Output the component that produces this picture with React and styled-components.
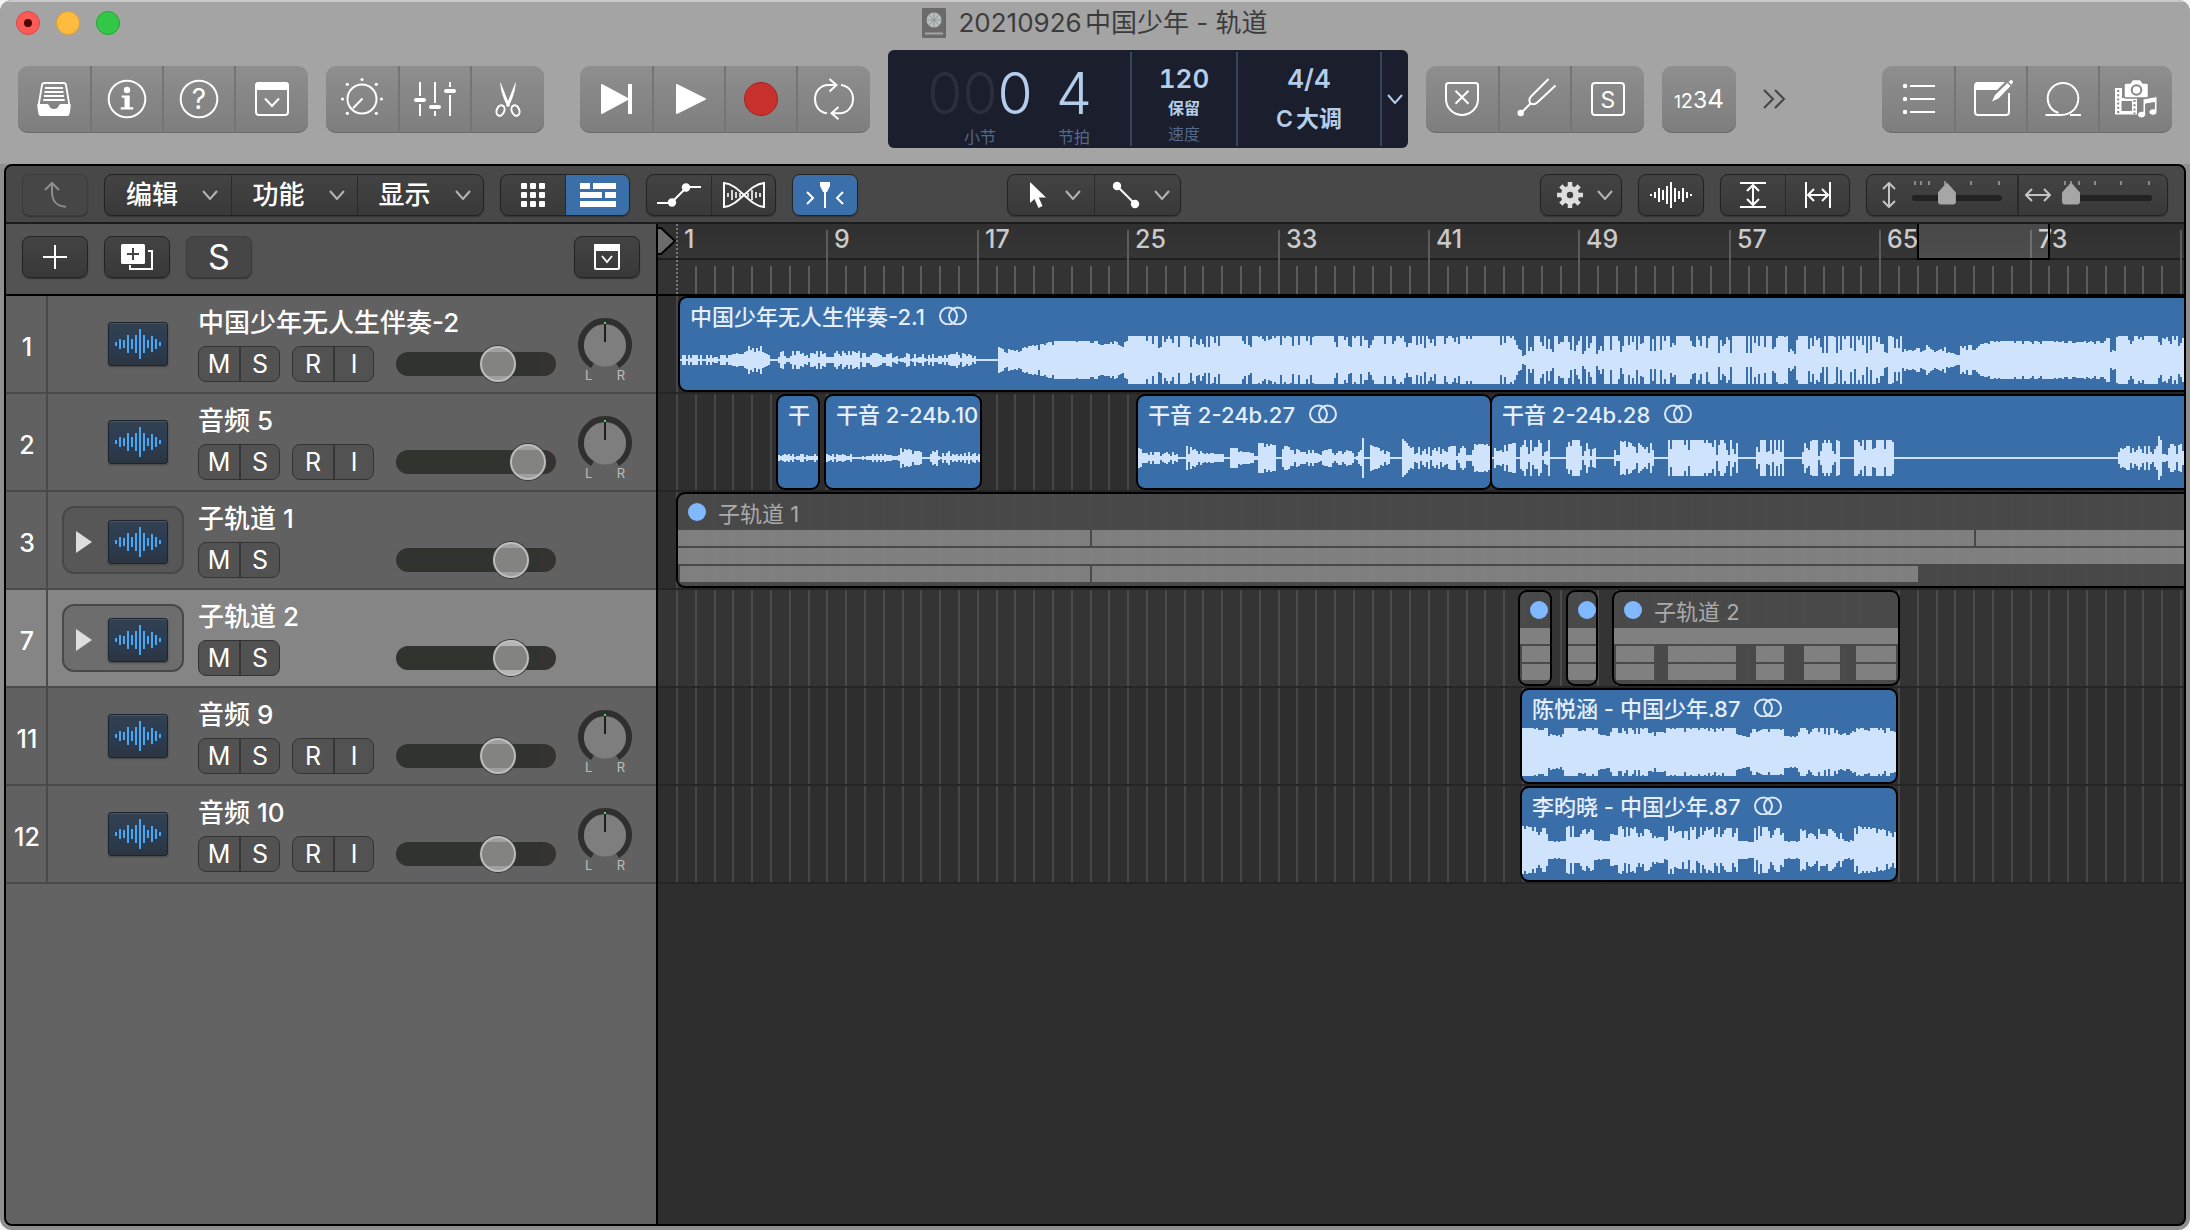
import React from "react"
import styled, { createGlobalStyle, css } from "styled-components"

/**
 * Tracks window of an audio workstation.
 *
 * - TitleBar / ControlBar: window chrome, transport and LCD.
 * - Toolbar: menus, tools and zoom sliders.
 * - TrackHeader: one row of the track list.
 * - Timeline: ruler, grid and regions.
 */

const GlobalStyle = createGlobalStyle`
  * {
    box-sizing: border-box;
  }
  body {
    margin: 0;
    background: #f4f4f4;
    font-family: Inter, "Noto Sans CJK SC", sans-serif;
  }
  button {
    font: inherit;
    color: inherit;
    padding: 0;
    margin: 0;
    border: 0;
    background: none;
  }
  svg {
    display: block;
    flex: none;
  }
`

/* ---------- data ---------- */

const BAR = 18.8
const ORIGIN = 19
const barX = bar => Math.round((bar - 1) * BAR) + ORIGIN

// waveform segments: [length, amplitude from, amplitude to, dip, chance of a dip]
const BACKING_WAVE = [
  [50, 5, 5, 1, 0.8],
  [18, 5, 10, 5, 0.6],
  [14, 15, 14, 8, 0.6],
  [8, 8, 4, 3, 0.5],
  [8, 1, 1, 1, 0],
  [92, 9, 9, 2, 0.8],
  [86, 7, 6, 1, 0.8],
  [20, 8, 4, 1, 0.5],
  [22, 1, 1, 1, 0],
  [6, 13, 12, 9, 0.3],
  [18, 11, 9, 7, 0.6],
  [20, 13, 16, 9, 0.4],
  [12, 16, 19, 15, 0.5],
  [64, 19, 19, 15, 0.5],
  [10, 16, 20, 13, 0.5],
  [16, 24, 24, 24, 0],
  [80, 24, 24, 12, 0.6],
  [14, 24, 24, 24, 0],
  [82, 24, 24, 12, 0.6],
  [14, 24, 24, 24, 0],
  [104, 24, 24, 12, 0.6],
  [80, 24, 24, 14, 0.5],
  [8, 12, 3, 3, 0.5],
  [376, 24, 24, 6, 0.5],
  [10, 12, 9, 8, 0.4],
  [10, 10, 14, 8, 0.4],
  [12, 18, 8, 8, 0.4],
  [12, 8, 14, 6, 0.4],
  [14, 8, 5, 4, 0.4],
  [28, 14, 17, 9, 0.6],
  [118, 19, 19, 16, 0.5],
  [4, 22, 22, 20, 0.2],
  [6, 12, 7, 6, 0.2],
  [560, 24, 24, 13, 0.6],
]

const VOCAL_28_WAVE = [
  [2, 1, 1, 1, 0],
  [22, 10, 16, 5, 0.4],
  [4, 1, 1, 1, 0],
  [30, 18, 18, 2, 0.7],
  [16, 1, 1, 1, 0],
  [30, 18, 18, 2, 0.8],
  [18, 1, 1, 1, 0],
  [20, 17, 17, 2, 0.9],
  [20, 15, 15, 3, 0.8],
  [14, 1, 1, 1, 0],
  [38, 18, 18, 8, 0.3],
  [32, 18, 18, 2, 0.7],
  [18, 1, 1, 1, 0],
  [28, 18, 18, 2, 0.6],
  [18, 1, 1, 1, 0],
  [38, 18, 18, 2, 0.8],
  [14, 1, 1, 1, 0],
  [40, 18, 18, 8, 0.3],
  [224, 1, 1, 1, 0],
  [40, 12, 12, 2, 0.8],
  [4, 22, 14, 10, 0.2],
  [6, 4, 4, 1, 0.5],
  [400, 14, 14, 4, 0.6],
]

const VOCAL_27_WAVE = [
  [12, 10, 6, 3, 0.4],
  [28, 6, 6, 2, 0.7],
  [8, 1, 1, 1, 0],
  [16, 12, 7, 4, 0.4],
  [22, 5, 4, 2, 0.5],
  [6, 1, 1, 1, 0],
  [12, 10, 9, 6, 0.4],
  [12, 6, 5, 3, 0.5],
  [4, 2, 2, 1, 0.5],
  [18, 15, 13, 8, 0.4],
  [6, 1, 1, 1, 0],
  [18, 13, 8, 3, 0.6],
  [26, 8, 8, 3, 0.6],
  [36, 9, 8, 1, 0.8],
  [2, 20, 20, 20, 0],
  [6, 1, 1, 1, 0],
  [20, 13, 5, 4, 0.3],
  [12, 1, 1, 1, 0],
  [10, 19, 8, 8, 0.2],
  [34, 11, 11, 2, 0.8],
  [20, 12, 12, 2, 0.8],
  [6, 3, 3, 1, 0.5],
  [20, 14, 14, 4, 0.6],
]

const SHORT_WAVE = [[42, 4, 4, 1, 0.7]]

const VOCAL_10_WAVE = [
  [26, 4, 4, 1, 0.7],
  [20, 1, 2, 1, 0.5],
  [28, 4, 3, 1, 0.6],
  [22, 10, 6, 4, 0.4],
  [8, 1, 1, 1, 0],
  [50, 8, 5, 1, 0.7],
]

const CHORUS_WAVE = [
  [26, 24, 24, 21, 0.4],
  [16, 18, 18, 15, 0.5],
  [34, 24, 24, 21, 0.4],
  [12, 18, 16, 15, 0.5],
  [40, 24, 24, 17, 0.5],
  [16, 20, 20, 15, 0.5],
  [70, 24, 24, 20, 0.4],
  [14, 18, 14, 13, 0.5],
  [34, 23, 23, 19, 0.4],
  [14, 16, 16, 15, 0.4],
  [40, 24, 24, 17, 0.5],
  [14, 19, 19, 13, 0.5],
  [46, 24, 24, 19, 0.3],
]

const HARMONY_WAVE = [
  [26, 24, 22, 14, 0.5],
  [18, 9, 9, 8, 0.5],
  [28, 24, 22, 12, 0.7],
  [16, 10, 9, 8, 0.5],
  [42, 24, 22, 12, 0.8],
  [16, 14, 12, 8, 0.5],
  [70, 24, 22, 9, 0.8],
  [16, 9, 8, 8, 0.3],
  [30, 24, 22, 9, 0.6],
  [16, 9, 9, 8, 0.3],
  [42, 22, 20, 11, 0.8],
  [12, 11, 9, 8, 0.3],
  [44, 24, 20, 13, 0.6],
]

const TRACKS = [
  {
    number: 1,
    name: "中国少年无人生伴奏-2",
    volume: 68,
    regions: [
      { name: "中国少年无人生伴奏-2.1", left: 20, width: 2400, stereo: true, wave: BACKING_WAVE },
    ],
  },
  {
    number: 2,
    name: "音频 5",
    volume: 92,
    regions: [
      { name: "干", left: 118, width: 44, wave: SHORT_WAVE },
      { name: "干音 2-24b.10", left: 166, width: 158, wave: VOCAL_10_WAVE },
      { name: "干音 2-24b.27", left: 478, width: 356, stereo: true, wave: VOCAL_27_WAVE },
      { name: "干音 2-24b.28", left: 832, width: 1600, stereo: true, wave: VOCAL_28_WAVE },
    ],
  },
  {
    number: 3,
    name: "子轨道 1",
    volume: 78,
    folder: true,
    regions: [
      {
        name: "子轨道 1",
        left: 18,
        width: 2400,
        lanes: [
          [[0, 412], [414, 1296], [1298, 2400]],
          [[0, 2400]],
          [[2, 412], [414, 1240]],
        ],
      },
    ],
  },
  {
    number: 7,
    name: "子轨道 2",
    volume: 78,
    folder: true,
    selected: true,
    regions: [
      { name: "", left: 860, width: 34, lanes: [[[0, 30]], [[2, 30]], [[2, 30]]] },
      { name: "", left: 908, width: 32, lanes: [[[0, 30]], [[0, 28]], [[0, 28]]] },
      {
        name: "子轨道 2",
        left: 954,
        width: 288,
        lanes: [
          [[0, 284]],
          [[2, 40], [54, 122], [142, 170], [190, 226], [242, 282]],
          [[2, 40], [54, 122], [142, 170], [190, 226], [242, 282]],
        ],
      },
    ],
  },
  {
    number: 11,
    name: "音频 9",
    volume: 68,
    regions: [
      { name: "陈悦涵 - 中国少年.87", left: 862, width: 378, stereo: true, wave: CHORUS_WAVE },
    ],
  },
  {
    number: 12,
    name: "音频 10",
    volume: 68,
    regions: [
      { name: "李昀晓 - 中国少年.87", left: 862, width: 378, stereo: true, wave: HARMONY_WAVE },
    ],
  },
]

/* ---------- icons ---------- */

const Icon = ({ w = 48, h = 48, children, color = "#fff", line = 2 }) => (
  <svg
    width={w}
    height={h}
    viewBox={`0 0 ${w} ${h}`}
    fill="none"
    stroke={color}
    strokeWidth={line}
    aria-hidden="true"
  >
    {children}
  </svg>
)

const LibraryIcon = () => (
  <Icon>
    <path d="M8.500 31 12 10q.4-2 2.400-2h19.200q2 0 2.400 2L39.500 31" strokeWidth="1.800" />
    <path d="M15 13h18M14.500 17h19M14 21h20M13.300 25h21.400" strokeWidth="1.800" />
    <path
      d="M7.500 29h9.500c3 0 1.500 5 7 5s4-5 7-5h9.500v4l-1 6q-.4 2-2.400 2H10.900q-2 0-2.400-2l-1-6z"
      fill="#fff"
      stroke="none"
    />
  </Icon>
)

const InfoIcon = () => (
  <Icon>
    <circle cx="24" cy="24" r="18.300" />
    <circle cx="24" cy="15" r="3.200" fill="#fff" stroke="none" />
    <path d="M18.700 20.500h8v11.800h3.600v2.200H17.700v-2.200h3.800v-9.600h-2.800z" fill="#fff" stroke="none" />
  </Icon>
)

const HelpIcon = () => (
  <Icon>
    <circle cx="24" cy="24" r="18.300" />
    <text x="24" y="34" fontSize="28" textAnchor="middle" fill="#fff" stroke="none">
      ?
    </text>
  </Icon>
)

const DrawerIcon = () => (
  <Icon>
    <rect x="8" y="8" width="32" height="32" rx="3" />
    <path d="M7 15v-4.500Q7 7 10.500 7h27Q41 7 41 10.500V15z" fill="#fff" stroke="none" />
    <path d="m17 23.500 7 7.500 7-7.500" />
  </Icon>
)

const KnobIcon = () => (
  <Icon>
    <circle cx="24" cy="24" r="14.500" />
    <path d="M15 33.300 24.500 23.500" />
    {[[24, 4.500], [9.300, 9.300], [38.300, 9.300], [4.500, 24], [43.500, 24], [9.300, 38.300], [38.300, 38.300]].map(
      ([cx, cy]) => (
        <circle key={`${cx}-${cy}`} cx={cx} cy={cy} r="1.600" fill="#fff" stroke="none" />
      )
    )}
  </Icon>
)

const MixerIcon = () => (
  <Icon>
    <path d="M9 7v14M9 29v12M24 7v21M24 36v5M39 7v5M39 20v21" />
    <path d="M5 25h8M20 32h8M35 16h8" strokeWidth="4" strokeLinecap="round" />
  </Icon>
)

const ScissorsIcon = () => (
  <Icon>
    <path d="M16.200 6.500 26 31l-2 .8C20 26 16.500 16 16.200 6.500z" fill="#fff" stroke="none" />
    <path d="M31.800 6.500 22 31l2 .8C28 26 31.500 16 31.800 6.500z" fill="#fff" stroke="none" />
    <ellipse cx="16.500" cy="35.500" rx="3.800" ry="5.400" transform="rotate(22 16.500 35.500)" />
    <ellipse cx="31.500" cy="35.500" rx="3.800" ry="5.400" transform="rotate(-22 31.500 35.500)" />
  </Icon>
)

const SkipIcon = () => (
  <Icon>
    <path d="M9 10q0-1.500 1.500-.8L36 23V9h4v30h-4V25L10.500 38.800Q9 39.500 9 38z" fill="#fff" stroke="none" />
  </Icon>
)

const PlayIcon = () => (
  <Icon>
    <path d="M11 10q0-1.500 1.500-.8l28 14q1 .8 0 1.600l-28 14Q11 39.500 11 38z" fill="#fff" stroke="none" />
  </Icon>
)

const RecordIcon = () => (
  <Icon>
    <circle cx="24" cy="24" r="16.500" fill="#c8302c" stroke="#a32521" strokeWidth="1" />
  </Icon>
)

const CycleIcon = () => (
  <Icon>
    <path d="M17 38.300C9 37 5 31 5 24c0-8 6-14 13-14h8.500M19.500 4l7 6-7 6.500" />
    <path d="M31 10c8 1.300 12 7 12 14 0 8-6 14.300-13 14.300h-8.500M28.500 32l-7 6.300 7 6" />
  </Icon>
)

const ShieldIcon = () => (
  <Icon>
    <path d="M10.500 8h27q2.500 0 2.500 2.500V24a16 16 0 0 1-32 0V10.500Q8 8 10.500 8z" />
    <path d="m17.500 15.700 13 13M30.500 15.700l-13 13" />
  </Icon>
)

const ForkIcon = () => (
  <Icon>
    <path d="M37.500 4 20 21.500c-3 3-1.500 5-.7 7 2 .8 4 2 7-1L44.500 10.500M19.500 28.500 10 38" />
    <circle cx="9.700" cy="38" r="3.200" fill="#fff" stroke="none" />
  </Icon>
)

const SoloIcon = () => (
  <Icon>
    <rect x="8" y="8" width="32" height="32" rx="3" />
    <text x="24" y="32.500" fontSize="23" textAnchor="middle" fill="#fff" stroke="none">
      S
    </text>
  </Icon>
)

const CountInIcon = () => (
  <Icon w={54}>
    <text x="27" y="33" textAnchor="middle" fill="#fff" stroke="none">
      <tspan fontSize="17">1</tspan>
      <tspan fontSize="20">2</tspan>
      <tspan fontSize="23">3</tspan>
      <tspan fontSize="26">4</tspan>
    </text>
  </Icon>
)

const MoreIcon = () => (
  <Icon w={24} h={20} color="#444">
    <path d="m2 1 9 9-9 9M13 1l9 9-9 9" />
  </Icon>
)

const ListIcon = () => (
  <Icon>
    <path d="M16 11h25M16 24h25M16 37h25" />
    {[11, 24, 37].map(cy => (
      <circle key={cy} cx="11" cy={cy} r="2.200" fill="#fff" stroke="none" />
    ))}
  </Icon>
)

const NotesIcon = () => (
  <Icon>
    <path d="M31 8H11q-3 0-3 3v26q0 3 3 3h28q3 0 3-3V18" />
    <path d="M8 15v-4.500Q8 7 11.500 7H38l-8 8z" fill="#fff" stroke="none" />
    <path d="M25 26.500 28 20 40.500 8l3 3L31.500 23.500zM41.500 7l1.500-1.500q1.500-1 2.500 0t0 2.500L44.500 9.800z" fill="#fff" stroke="none" />
  </Icon>
)

const LoopIcon = () => (
  <Icon>
    <path d="M6.500 40H22c11 0 17.300-8 17.300-16.700a15.300 15.300 0 0 0-30.600 0c0 7 4.300 13 10.800 14.700" />
    <path d="M31 40h11" />
  </Icon>
)

const MediaIcon = () => (
  <Icon>
    <path d="M3 13h7v10h15v16.500H3z" fill="#fff" stroke="none" />
    <path d="M6.200 15v23M22.500 25v14" stroke="#868686" strokeDasharray="2 2.200" />
    <path d="M9.500 26h10.500v10H9.500z" fill="#868686" stroke="none" />
    <path d="M12 10q0-2 2-2h4l2.500-3.500h8L31 8h3.500q2 0 2 2v11q0 2-2 2H14q-2 0-2-2z" fill="#fff" stroke="#868686" strokeWidth="1.500" />
    <circle cx="24.500" cy="15" r="4.800" stroke="#868686" />
    <path d="m31 24 14-2.500V37a4 3.200 0 1 1-2.600-3V27.500L33.600 29v10.500a4 3.300 0 1 1-2.600-3z" fill="#fff" stroke="#868686" strokeWidth="1" />
  </Icon>
)

const Chevron = ({ color = "#b4b4b4" }) => (
  <Icon w={16} h={10} color={color}>
    <path d="m1 1 7 8 7-8" />
  </Icon>
)

const BackIcon = () => (
  <Icon w={28} h={28} color="#8f8f8f">
    <path d="M4 9 11 2l7 7M11 2v9c0 9 5 14.500 14 14.700" />
  </Icon>
)

const GridIcon = () => (
  <Icon w={24} h={24}>
    {[0, 9, 18].map(y =>
      [0, 9, 18].map(x => (
        <rect key={`${x}-${y}`} x={x} y={y} width="6" height="6" rx="1" fill="#fff" stroke="none" />
      ))
    )}
  </Icon>
)

const TracksIcon = () => (
  <Icon w={36} h={24}>
    <path d="M0 0h10v6H0zM13 0h23v6H13zM0 9h22v6H0zM25 9h11v6H25zM0 18h36v6H0z" fill="#fff" stroke="none" />
  </Icon>
)

const AutomationIcon = () => (
  <Icon w={44} h={30}>
    <path d="M0 23h11M15 22 29 8M33 7h11" />
    <circle cx="15" cy="22.500" r="4.200" fill="#fff" stroke="none" />
    <circle cx="29" cy="7.500" r="4.200" fill="#fff" stroke="none" />
  </Icon>
)

const FlexIcon = () => (
  <Icon w={42} h={28}>
    <path d="M1 2c15 1 25 23 40 24V2C26 3 16 25 1 26z" />
    <path d="M5 12v4M9 9v10M13 11v6M17 12v4M25 12v4M29 9v10M33 11v6M37 12v4" strokeWidth="1.600" />
  </Icon>
)

const CatchIcon = () => (
  <Icon w={42} h={26}>
    <path d="m3 10 6 6-6 6M39 10l-6 6 6 6M21 6v20" />
    <path d="M16 0h10v4l-3 6h-4l-3-6z" fill="#fff" stroke="none" />
  </Icon>
)

const PointerIcon = () => (
  <Icon w={18} h={26}>
    <path d="M1 0v21l4.500-4 4 9 4-2-3.700-8.500H17z" fill="#fff" stroke="none" />
  </Icon>
)

const LineToolIcon = () => (
  <Icon w={28} h={28}>
    <path d="M5 5 23 23" />
    <circle cx="5" cy="5" r="4.200" fill="#fff" stroke="none" />
    <circle cx="23" cy="23" r="4.200" fill="#fff" stroke="none" />
  </Icon>
)

const GearIcon = () => (
  <Icon w={26} h={26} color="#dedede">
    <circle cx="13" cy="13" r="6.200" strokeWidth="6" />
    {[0, 45, 90, 135].map(a => (
      <path
        key={a}
        d="M13 0v5M13 21v5"
        strokeWidth="4.500"
        transform={`rotate(${a} 13 13)`}
      />
    ))}
  </Icon>
)

const BarsIcon = ({ heights, color, h }) => (
  <Icon w={heights.length * 4 - 2} h={h} color={color}>
    {heights.map((v, i) => (
      <path key={i} d={`M${i * 4 + 1} ${(h - v) / 2}v${v}`} />
    ))}
  </Icon>
)

const FitHeightIcon = () => (
  <Icon w={26} h={26}>
    <path d="M0 1h26M0 25h26M13 3v20M7 9l6-6 6 6M7 17l6 6 6-6" />
  </Icon>
)

const FitWidthIcon = () => (
  <Icon w={26} h={26}>
    <path d="M1 0v26M25 0v26M3 13h20M9 7l-6 6 6 6M17 7l6 6-6 6" />
  </Icon>
)

const VerticalIcon = () => (
  <Icon w={16} h={26} color="#c4c4c4">
    <path d="M8 1v24M2 7l6-6 6 6M2 19l6 6 6-6" />
  </Icon>
)

const HorizontalIcon = () => (
  <Icon w={26} h={16} color="#c4c4c4">
    <path d="M1 8h24M7 2 1 8l6 6M19 2l6 6-6 6" />
  </Icon>
)

const PlusIcon = () => (
  <Icon w={24} h={24}>
    <path d="M12 0v24M0 12h24" />
  </Icon>
)

const DuplicateIcon = () => (
  <Icon w={32} h={28}>
    <path d="M27 8h4v18H9v-4" />
    <rect x="0" y="1" width="24" height="20" rx="1.500" fill="#fff" stroke="none" />
    <path d="M12 5v12M6 11h12" stroke="#444" />
  </Icon>
)

const DrawerSmallIcon = () => (
  <Icon w={26} h={26}>
    <rect x="1" y="1" width="24" height="24" rx="1" />
    <path d="M0 0h26v7H0z" fill="#fff" stroke="none" />
    <path d="m8 12 5 6 5-6" strokeWidth="1.800" />
  </Icon>
)

const StereoIcon = () => (
  <Icon w={28} h={20} color="#dce9fb">
    <circle cx="9.500" cy="11" r="8.500" />
    <circle cx="18.500" cy="11" r="8.500" />
  </Icon>
)

const ProjectIcon = () => (
  <Icon w={24} h={30}>
    <rect width="24" height="30" rx="1" fill="#6a6a6a" stroke="none" />
    <circle cx="12" cy="12" r="7.500" fill="#b9bec1" stroke="none" />
    <path d="M12 4.500v15M4.500 12h15M7 7l10 10M17 7 7 17" stroke="#8d9498" strokeWidth="1" />
    <path d="M3 25.500h18" stroke="#a5a5a5" />
  </Icon>
)

const PanKnob = () => (
  <Icon w={54} h={50}>
    <path d="M14.500 47.500A24 24 0 1 1 39.500 47.500" stroke="#2f2f2f" strokeWidth="6" />
    <circle cx="27" cy="27.500" r="21" fill="#7e7e7e" stroke="none" />
    <path d="M27 6v18" stroke="#1f1f1f" />
    <path d="M27 4v2" stroke="#58d164" />
  </Icon>
)

/* ---------- window chrome ---------- */

const Window = styled.div`
  display: flex;
  flex-direction: column;
  min-height: 100vh;
  border-radius: 12px;
  overflow: hidden;
  background: #8f8f8f;
`

const Chrome = styled.header`
  height: 164px;
  background: #a4a4a4;
  box-shadow: inset 0 2px 0 #c9c9c9;
`

const TitleBar = styled.div`
  display: grid;
  grid-template-columns: 1fr auto 1fr;
  align-items: center;
  height: 50px;
  padding: 0 16px 4px;
`

const Lights = styled.div`
  display: flex;
  gap: 16px;
`

const Light = styled.button`
  display: flex;
  align-items: center;
  justify-content: center;
  width: 24px;
  height: 24px;
  border-radius: 50%;
  background: ${p => p.$color};
  border: 1px solid ${p => p.$edge};

  &:first-child::after {
    content: "";
    width: 8px;
    height: 8px;
    border-radius: 50%;
    background: #4c0502;
  }
`

const Title = styled.h1`
  display: flex;
  align-items: center;
  gap: 12px;
  margin: 0;
  font-size: 26px;
  font-weight: 400;
  line-height: 32px;
  text-autospace: normal;
  color: #3c3c3c;
`

const ControlBar = styled.div`
  display: flex;
  align-items: center;
  gap: 18px;
  height: 98px;
  padding: 0 18px;
`

const ButtonGroup = styled.div`
  display: flex;
  height: 67px;
  border-radius: 10px;
  overflow: hidden;
  background: linear-gradient(#8e8e8e, #7e7e7e);
  box-shadow: inset 0 -1px 0 #6a6a6a;
  margin-left: ${p => (p.$push ? "auto" : p.$apart ? "18px" : "0")};
`

const BarButton = styled.button`
  display: flex;
  align-items: center;
  justify-content: center;
  width: 72px;

  & + & {
    border-left: 2px solid #757575;
  }
  &:last-child {
    width: 74px;
  }
`

const MoreButton = styled.button`
  display: flex;
  padding: 8px;
`

const Lcd = styled.div`
  display: flex;
  height: 98px;
  border-radius: 6px;
  padding: 2px 0;
  background: #1b1e2c;
  color: #b3cdea;
`

const LcdPosition = styled.div`
  display: grid;
  grid-template-columns: 108px 32px;
  column-gap: 24px;
  justify-items: center;
  justify-content: center;
  width: 242px;
  padding: 11px 2px 0 0;
`

const LcdCell = styled.div`
  display: flex;
  flex-direction: column;
  align-items: center;
  width: ${p => p.$width};
  padding-top: 12px;
  border-left: 2px solid #33465c;
  font-size: 26px;
  font-weight: 600;
  font-variant-numeric: tabular-nums;
  line-height: 30px;
`

const BigDigits = styled.span`
  font-size: 57px;
  font-weight: 300;
  line-height: 62px;

  i {
    font-style: normal;
    color: #2b2f3d;
  }
`

const LcdNote = styled.span`
  font-size: 16px;
  font-weight: ${p => (p.$strong ? 700 : 400)};
  line-height: ${p => (p.$strong ? "28px" : "24px")};
  color: ${p => (p.$strong ? "#b3cdea" : "#55698a")};
`

const LcdKey = styled.span`
  font-size: 23px;
  line-height: 30px;
  margin-top: 10px;
  text-autospace: normal;
`

const LcdMenu = styled.button`
  display: flex;
  align-items: center;
  justify-content: center;
  width: 28px;
  border-left: 2px solid #33465c;
`

/* ---------- tracks panel ---------- */

const Panel = styled.main`
  display: flex;
  flex-direction: column;
  flex: 1;
  margin: 0 4px 4px;
  border: 2px solid #000;
  border-radius: 8px;
  overflow: hidden;
  background: #2e2e2e;
`

const Toolbar = styled.div`
  display: flex;
  align-items: center;
  gap: 16px;
  height: 58px;
  padding: 2px 16px 0;
  background: #484848;
  border-bottom: 2px solid #1c1c1c;
`

const Spring = styled.div`
  flex: ${p => p.$grow};
`

const ToolGroup = styled.div`
  display: flex;
  height: 42px;
  border: 1px solid ${p => (p.$faint ? "#3c3c3c" : "#232323")};
  border-radius: 8px;
  overflow: hidden;
  background: ${p => (p.$faint ? "#464646" : "linear-gradient(#434343, #393939)")};
  box-shadow: 0 1px 1px #333;
`

const ToolButton = styled.button`
  display: flex;
  align-items: center;
  justify-content: center;
  gap: ${p => p.$gap || "0"};
  width: ${p => p.$width || "64px"};
  padding-left: ${p => (p.$gap ? "8px" : "0")};
  font-size: 26px;
  font-weight: 500;
  line-height: 36px;
  color: #fff;
  ${p =>
    p.$letter &&
    css`
      font-size: 34px;
      font-weight: 400;
    `}
  ${p =>
    p.$active &&
    css`
      background: #3a6fa9;
    `}

  & + & {
    border-left: 1px solid #2a2a2a;
  }
`

const ZoomCell = styled.label`
  display: flex;
  align-items: center;
  justify-content: space-between;
  width: 150px;
  padding: 0 15px 0 ${p => (p.$wide ? "6px" : "14px")};

  & + & {
    border-left: 2px solid #2a2a2a;
  }
`

const ZoomScale = styled.span`
  display: flex;
  flex-direction: column;
  width: 90px;
`

const ZoomSlider = styled.input`
  appearance: none;
  width: 90px;
  height: 24px;
  margin: 0;
  background: none;

  &::-webkit-slider-runnable-track {
    height: 6px;
    border-radius: 3px;
    background: #222;
  }
  &::-webkit-slider-thumb {
    appearance: none;
    width: 18px;
    height: 22px;
    margin-top: -12px;
    background: #a6a6a6;
    border-radius: 4px;
    clip-path: polygon(50% 0, 100% 45%, 100% 100%, 0 100%, 0 45%);
  }
`

const Body = styled.div`
  display: flex;
  flex: 1;
`

const Sidebar = styled.section`
  width: 652px;
  border-right: 2px solid #000;
  background: #626262;
`

const SidebarTools = styled.div`
  display: flex;
  align-items: center;
  gap: 16px;
  height: 72px;
  padding: 0 16px 4px;
  background: #535353;
  border-bottom: 2px solid #000;
`

const TrackList = styled.ul`
  margin: 0;
  padding: 0;
  list-style: none;
`

const TrackRow = styled.li`
  display: flex;
  height: 98px;
  border-bottom: 2px solid #4a4a4a;
  background: ${p => (p.$selected ? "#858585" : "#616161")};
  color: #fff;
`

const TrackNumber = styled.span`
  display: flex;
  align-items: center;
  justify-content: center;
  width: 42px;
  padding: 6px 0 0 2px;
  border-right: 2px solid #4a4a4a;
  font-size: 25px;
  font-weight: 500;
`

const IconCell = styled.div`
  display: flex;
  align-items: center;
  justify-content: flex-end;
  width: 150px;
  padding-right: ${p => (p.$folder ? "14px" : "30px")};
`

const FolderBox = styled.div`
  display: flex;
  align-items: center;
  justify-content: space-between;
  width: 122px;
  height: 68px;
  padding: 4px 14px 0 12px;
  border: 2px solid #484848;
  border-radius: 12px;
  background: ${p => (p.$selected ? "#6d6d6d" : "#575757")};
`

const Disclosure = styled.button`
  width: 16px;
  height: 22px;
  background: #dedede;
  clip-path: polygon(0 0, 100% 50%, 0 100%);
`

const TrackIcon = styled.span`
  display: flex;
  align-items: center;
  justify-content: center;
  width: 60px;
  height: 44px;
  border: 1px solid #1c2430;
  border-radius: 3px;
  background: linear-gradient(#33404f, #2a3d55 50%, #2c3540);
  box-shadow: 0 1px 2px #444, inset 0 1px 0 #4b5560;
`

const TrackControls = styled.div`
  display: flex;
  flex-direction: column;
  gap: 7px;
  width: 358px;
  padding-top: 11px;
`

const TrackName = styled.span`
  font-size: 26px;
  font-weight: 500;
  line-height: 32px;
  white-space: nowrap;
`

const ControlsLine = styled.div`
  display: flex;
  gap: 12px;
  align-items: center;
`

const Switches = styled.div`
  display: flex;
  height: 36px;
  border: 1px solid #333;
  border-radius: 8px;
  overflow: hidden;
  background: #525252;
`

const Switch = styled.button`
  width: 40px;
  font-size: 25px;
  line-height: 34px;

  & + & {
    border-left: 2px solid #363636;
  }
`

const Volume = styled.input`
  appearance: none;
  width: 160px;
  height: 36px;
  margin: 0 0 0 auto;
  background: none;

  &::-webkit-slider-runnable-track {
    height: 24px;
    border-radius: 12px;
    background: linear-gradient(90deg, #31332f 90%, #36322f 92%);
  }
  &::-webkit-slider-thumb {
    appearance: none;
    width: 36px;
    height: 36px;
    margin-top: -6px;
    border: 2px solid #bdbdbd;
    border-radius: 50%;
    background: rgba(255, 255, 255, 0.4);
    box-shadow: 0 0 0 1px #3a3a3a;
  }
`

const Pan = styled.div`
  display: flex;
  flex-direction: column;
  align-items: center;
  width: 54px;
  margin: 22px 0 0 22px;
`

const PanLabels = styled.span`
  display: flex;
  justify-content: space-between;
  width: 40px;
  font-size: 13px;
  line-height: 14px;
  color: #bdbdbd;
`

/* ---------- timeline ---------- */

const TimelineArea = styled.section`
  position: relative;
  flex: 1;
  min-width: 0;
  overflow: hidden;
`

const Ruler = styled.div`
  position: relative;
  height: 72px;
  background: linear-gradient(#303030, #353535 34px, #1e1e1e 34px, #1e1e1e 36px, #333 36px);
  border-bottom: 2px solid #000;
`

const Overlay = styled.svg`
  position: absolute;
  top: 0;
  left: 0;
`

const BarNumber = styled.span`
  position: absolute;
  top: 0;
  font-size: 25px;
  font-weight: 500;
  line-height: 31px;
  color: #cacaca;
`

const CycleRange = styled.div`
  position: absolute;
  top: 0;
  height: 36px;
  border: 2px solid #000;
  border-top: 0;
  background: rgba(255, 255, 255, 0.12);
`

const Lanes = styled.div`
  position: relative;
`

const Lane = styled.div`
  position: relative;
  height: 98px;
  border-bottom: 2px solid #252525;
  background: ${p => (p.$selected ? "rgba(255, 255, 255, 0.03)" : "none")};
`

const RegionBox = styled.div`
  position: absolute;
  top: 0;
  height: 96px;
  border: 2px solid #000;
  border-radius: 9px;
  overflow: hidden;
  background: ${p => (p.$folder ? "rgba(75, 75, 75, 0.92)" : "#3a6ea9")};
`

const RegionName = styled.span`
  display: flex;
  align-items: center;
  gap: ${p => (p.$folder ? "12px" : "14px")};
  height: 36px;
  padding: ${p => (p.$folder ? "0 0 0 10px" : "0 0 3px 10px")};
  font-size: 22px;
  font-weight: ${p => (p.$folder ? 400 : 500)};
  white-space: nowrap;
  color: ${p => (p.$folder ? "#ababab" : "#e4eefc")};
`

const Dot = styled.span`
  flex: none;
  width: 18px;
  height: 18px;
  border-radius: 50%;
  background: #80b9ff;
`

/** Deterministic noise, so that each region keeps its shape between renders. */
const noise = seed => {
  let s = seed
  return () => {
    s = (s * 16807) % 2147483647
    return s / 2147483647
  }
}

const wavePath = (segments, centre) => {
  const rand = noise(segments.length * 7919 + 31)
  let x = 0
  let d = ""
  segments.forEach(([length, from, to, dip, chance]) => {
    for (let i = 0; i < length; i += 2) {
      const base = from + ((to - from) * i) / length
      const amp = Math.round(rand() < chance ? dip + (base - dip) * rand() : base)
      d += `M${x} ${centre - amp}h2v${amp * 2}h-2z`
      x += 2
    }
  })
  return d
}

const Waveform = ({ segments }) => (
  <svg width={segments.reduce((sum, s) => sum + s[0], 0)} height="56" aria-hidden="true">
    <path d={wavePath(segments, 26)} fill="#cfe3fc" shapeRendering="crispEdges" />
  </svg>
)

const FolderContents = ({ lanes, width }) => (
  <svg width={width} height="56" aria-hidden="true">
    {lanes.map((blocks, row) =>
      blocks.map(([from, to]) => (
        <rect
          key={`${row}-${from}`}
          x={from}
          y={row * 18}
          width={to - from}
          height="16"
          fill="rgba(255, 255, 255, 0.3)"
        />
      ))
    )}
  </svg>
)

const Region = ({ region }) => {
  const folder = Boolean(region.lanes)
  return (
    <RegionBox $folder={folder} style={{ left: region.left, width: region.width }}>
      <RegionName $folder={folder}>
        {folder && <Dot />}
        {region.name}
        {region.stereo && <StereoIcon />}
      </RegionName>
      {folder ? (
        <FolderContents lanes={region.lanes} width={region.width} />
      ) : (
        <Waveform segments={region.wave} />
      )}
    </RegionBox>
  )
}

const BARS = Array.from({ length: 81 }, (_, i) => i + 1)
const LABELLED_BARS = [1, 9, 17, 25, 33, 41, 49, 57, 65, 73]
const isMajor = bar => bar > 1 && bar % 8 === 1

const Timeline = () => (
  <TimelineArea>
    <Ruler>
      <Overlay width="3000" height="70" shapeRendering="crispEdges" aria-hidden="true">
        <path d={`M${ORIGIN} 0v70`} stroke="#777" strokeWidth="2" strokeDasharray="2 2" />
        {BARS.slice(1).map(bar => (
          <path
            key={bar}
            d={`M${barX(bar)} ${isMajor(bar) ? 6 : 42}V70`}
            stroke="#5c5c5c"
            strokeWidth="2"
          />
        ))}
      </Overlay>
      <Overlay width="20" height="36" aria-hidden="true">
        <path d="M-2 4h5L17 17 3 30h-5z" fill="#6c6c6c" stroke="#000" strokeWidth="2" />
      </Overlay>
      {LABELLED_BARS.map(bar => (
        <BarNumber key={bar} style={{ left: barX(bar) + 7 }}>
          {bar}
        </BarNumber>
      ))}
      <CycleRange style={{ left: barX(67) - 1, width: barX(74) - barX(67) + 2 }} />
    </Ruler>
    <Lanes>
      <Overlay width="3000" height={TRACKS.length * 98} shapeRendering="crispEdges" aria-hidden="true">
        {BARS.map(bar => (
          <path key={bar} d={`M${barX(bar)} 0v${TRACKS.length * 98}`} stroke="#464646" strokeWidth="2" />
        ))}
      </Overlay>
      {TRACKS.map(track => (
        <Lane key={track.number} $selected={track.selected}>
          {track.regions.map(region => (
            <Region key={region.left} region={region} />
          ))}
        </Lane>
      ))}
    </Lanes>
  </TimelineArea>
)

const TrackBadge = () => (
  <TrackIcon>
    <BarsIcon heights={[4, 10, 8, 18, 10, 18, 30, 18, 8, 16, 10, 4]} color="#4ba6f2" h={30} />
  </TrackIcon>
)

const TrackHeader = ({ track }) => (
  <TrackRow $selected={track.selected}>
    <TrackNumber>{track.number}</TrackNumber>
    <IconCell $folder={track.folder}>
      {track.folder ? (
        <FolderBox $selected={track.selected}>
          <Disclosure aria-label={`展开 ${track.name}`} />
          <TrackBadge />
        </FolderBox>
      ) : (
        <TrackBadge />
      )}
    </IconCell>
    <TrackControls>
      <TrackName>{track.name}</TrackName>
      <ControlsLine>
        <Switches>
          <Switch>M</Switch>
          <Switch>S</Switch>
        </Switches>
        {!track.folder && (
          <Switches>
            <Switch>R</Switch>
            <Switch>I</Switch>
          </Switches>
        )}
        <Volume type="range" defaultValue={track.volume} aria-label={`${track.name} 音量`} />
      </ControlsLine>
    </TrackControls>
    {!track.folder && (
      <Pan>
        <PanKnob />
        <PanLabels>
          <span>L</span>
          <span>R</span>
        </PanLabels>
      </Pan>
    )}
  </TrackRow>
)

const Zoom = ({ label, icon, value, ticks, wide }) => (
  <ZoomCell $wide={wide}>
    {icon}
    <ZoomScale>
      <svg width="90" height="5" aria-hidden="true">
        {ticks.map(x => (
          <rect key={x} x={x} y="0" width="2" height="4" fill="#8a8a8a" />
        ))}
      </svg>
      <ZoomSlider type="range" defaultValue={value} aria-label={label} />
    </ZoomScale>
  </ZoomCell>
)

const Menu = ({ children }) => (
  <ToolButton $width="126px" $gap="24px" aria-haspopup="menu">
    {children}
    <Chevron />
  </ToolButton>
)

const App = () => (
  <>
    <GlobalStyle />
    <Window>
      <Chrome>
        <TitleBar>
          <Lights>
            <Light $color="#fc5b57" $edge="#df4744" aria-label="关闭" />
            <Light $color="#fdbc40" $edge="#e0a02e" aria-label="最小化" />
            <Light $color="#33c748" $edge="#24a536" aria-label="缩放" />
          </Lights>
          <Title>
            <ProjectIcon />
            20210926中国少年 - 轨道
          </Title>
        </TitleBar>
        <ControlBar>
          <ButtonGroup>
            <BarButton aria-label="资源库"><LibraryIcon /></BarButton>
            <BarButton aria-label="检查器"><InfoIcon /></BarButton>
            <BarButton aria-label="快速帮助"><HelpIcon /></BarButton>
            <BarButton aria-label="工具栏"><DrawerIcon /></BarButton>
          </ButtonGroup>
          <ButtonGroup>
            <BarButton aria-label="智能控制"><KnobIcon /></BarButton>
            <BarButton aria-label="混音器"><MixerIcon /></BarButton>
            <BarButton aria-label="编辑器"><ScissorsIcon /></BarButton>
          </ButtonGroup>
          <ButtonGroup $apart>
            <BarButton aria-label="从头播放"><SkipIcon /></BarButton>
            <BarButton aria-label="播放"><PlayIcon /></BarButton>
            <BarButton aria-label="录音"><RecordIcon /></BarButton>
            <BarButton aria-label="循环"><CycleIcon /></BarButton>
          </ButtonGroup>
          <Lcd>
            <LcdPosition>
              <BigDigits><i>00</i>0</BigDigits>
              <BigDigits>4</BigDigits>
              <LcdNote>小节</LcdNote>
              <LcdNote>节拍</LcdNote>
            </LcdPosition>
            <LcdCell $width="106px">
              120
              <LcdNote $strong>保留</LcdNote>
              <LcdNote>速度</LcdNote>
            </LcdCell>
            <LcdCell $width="144px">
              4/4
              <LcdKey>C大调</LcdKey>
            </LcdCell>
            <LcdMenu aria-label="显示模式"><Chevron color="#b3cdea" /></LcdMenu>
          </Lcd>
          <ButtonGroup>
            <BarButton aria-label="替换"><ShieldIcon /></BarButton>
            <BarButton aria-label="调音器"><ForkIcon /></BarButton>
            <BarButton aria-label="独奏"><SoloIcon /></BarButton>
          </ButtonGroup>
          <ButtonGroup>
            <BarButton aria-label="预备拍"><CountInIcon /></BarButton>
          </ButtonGroup>
          <MoreButton aria-label="更多"><MoreIcon /></MoreButton>
          <ButtonGroup $push>
            <BarButton aria-label="列表编辑器"><ListIcon /></BarButton>
            <BarButton aria-label="记事本"><NotesIcon /></BarButton>
            <BarButton aria-label="循环浏览器"><LoopIcon /></BarButton>
            <BarButton aria-label="浏览器"><MediaIcon /></BarButton>
          </ButtonGroup>
        </ControlBar>
      </Chrome>

      <Panel>
        <Toolbar>
          <ToolGroup $faint>
            <ToolButton aria-label="返回"><BackIcon /></ToolButton>
          </ToolGroup>
          <ToolGroup>
            <Menu>编辑</Menu>
            <Menu>功能</Menu>
            <Menu>显示</Menu>
          </ToolGroup>
          <ToolGroup>
            <ToolButton aria-label="网格"><GridIcon /></ToolButton>
            <ToolButton $active aria-label="轨道"><TracksIcon /></ToolButton>
          </ToolGroup>
          <ToolGroup>
            <ToolButton aria-label="自动化"><AutomationIcon /></ToolButton>
            <ToolButton aria-label="弹性"><FlexIcon /></ToolButton>
          </ToolGroup>
          <ToolGroup>
            <ToolButton $active aria-label="跟随播放头"><CatchIcon /></ToolButton>
          </ToolGroup>
          <Spring $grow={5} />
          <ToolGroup>
            <ToolButton $width="86px" $gap="18px" aria-label="指针工具"><PointerIcon /><Chevron /></ToolButton>
            <ToolButton $width="86px" $gap="14px" aria-label="自动化曲线工具"><LineToolIcon /><Chevron /></ToolButton>
          </ToolGroup>
          <Spring $grow={14} />
          <ToolGroup>
            <ToolButton $width="80px" $gap="14px" aria-label="设置"><GearIcon /><Chevron /></ToolButton>
          </ToolGroup>
          <ToolGroup>
            <ToolButton aria-label="波形缩放">
              <BarsIcon heights={[2, 6, 14, 10, 18, 26, 14, 8, 14, 6, 2]} color="#fff" h={26} />
            </ToolButton>
          </ToolGroup>
          <ToolGroup>
            <ToolButton aria-label="适合高度"><FitHeightIcon /></ToolButton>
            <ToolButton aria-label="适合宽度"><FitWidthIcon /></ToolButton>
          </ToolGroup>
          <ToolGroup>
            <Zoom label="垂直缩放" icon={<VerticalIcon />} value={36} ticks={[2, 8, 16, 32, 58, 86]} />
            <Zoom label="水平缩放" icon={<HorizontalIcon />} value={0} ticks={[2, 8, 16, 32, 58, 86]} wide />
          </ToolGroup>
        </Toolbar>

        <Body>
          <Sidebar>
            <SidebarTools>
              <ToolGroup><ToolButton aria-label="添加轨道"><PlusIcon /></ToolButton></ToolGroup>
              <ToolGroup><ToolButton aria-label="复制轨道"><DuplicateIcon /></ToolButton></ToolGroup>
              <ToolGroup $faint><ToolButton $letter>S</ToolButton></ToolGroup>
              <Spring $grow={1} />
              <ToolGroup><ToolButton aria-label="轨道头设置"><DrawerSmallIcon /></ToolButton></ToolGroup>
            </SidebarTools>
            <TrackList>
              {TRACKS.map(track => (
                <TrackHeader key={track.number} track={track} />
              ))}
            </TrackList>
          </Sidebar>
          <Timeline />
        </Body>
      </Panel>
    </Window>
  </>
)

export default App
